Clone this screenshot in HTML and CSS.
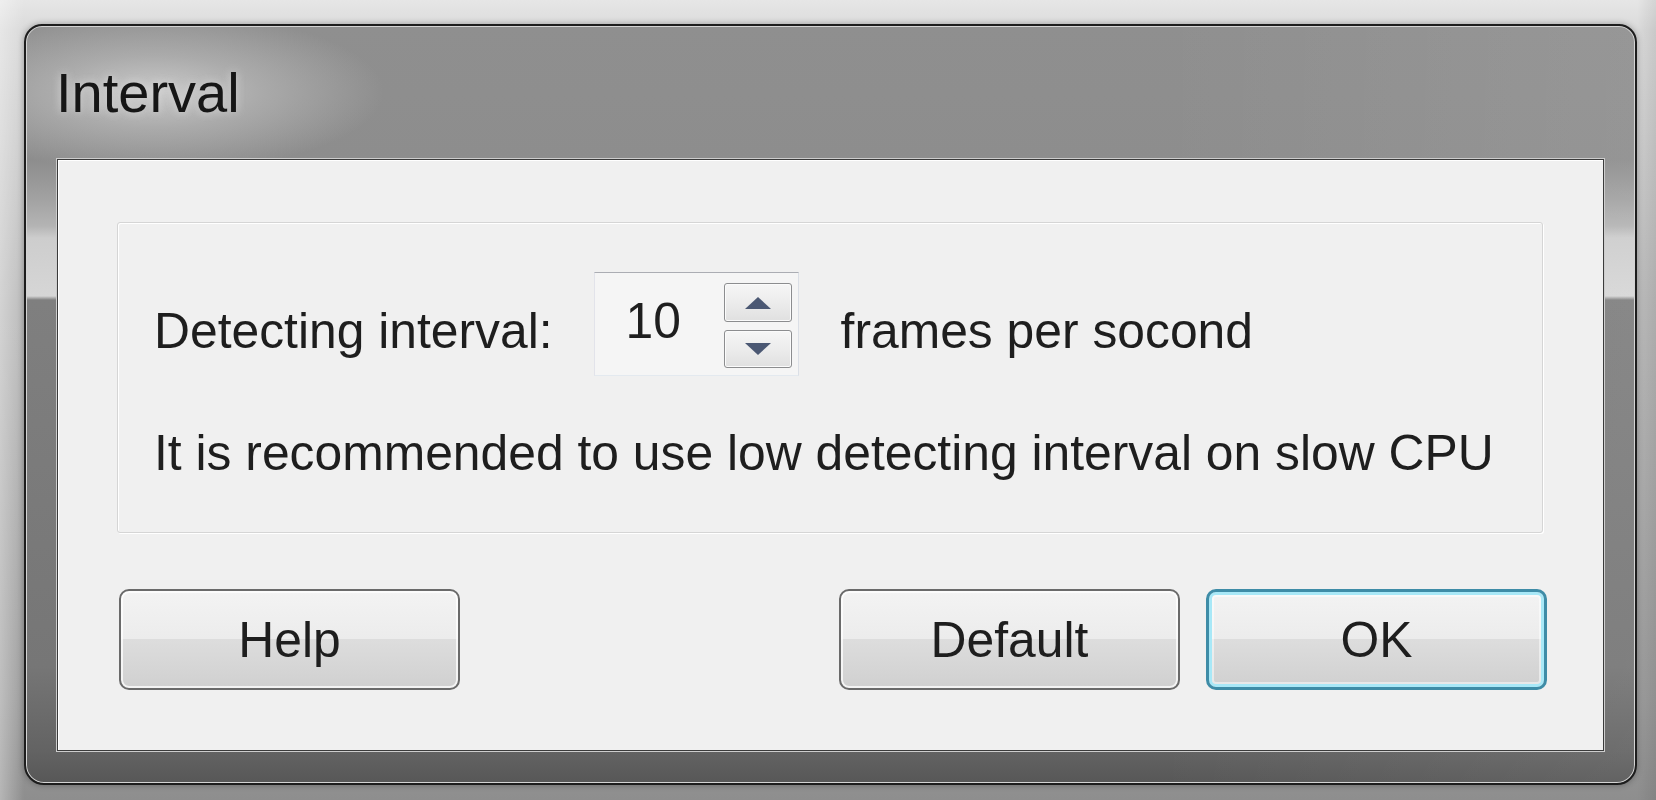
FILE: index.html
```html
<!DOCTYPE html>
<html lang="en">
<head>
<meta charset="utf-8">
<title>Interval</title>
<link rel="stylesheet" href="styles.css">
</head>
<body>
<div class="screen">
  <div class="window">
    <div class="titlebar"><span class="title">Interval</span></div>
    <div class="client">
      <div class="group">
        <div class="row">
          <span class="label">Detecting interval:</span>
          <div class="spin">
            <span class="spin-value">10</span>
            <div class="spin-buttons">
              <span class="spin-btn spin-up"><svg width="28" height="14" viewBox="0 0 28 14"><path d="M14 1 L27 13 H1 Z" fill="#4b5873"/></svg></span>
              <span class="spin-btn spin-down"><svg width="28" height="14" viewBox="0 0 28 14"><path d="M1 1 H27 L14 13 Z" fill="#4b5873"/></svg></span>
            </div>
          </div>
          <span class="label unit">frames per socond</span>
        </div>
        <p class="hint">It is recommended to use low detecting interval on slow CPU</p>
      </div>
      <div class="buttons">
        <button class="btn">Help</button>
        <span class="spacer"></span>
        <button class="btn">Default</button>
        <button class="btn btn-primary">OK</button>
      </div>
    </div>
  </div>
</div>
</body>
</html>
```

FILE: styles.css
```css
html, body {
  margin: 0;
  padding: 0;
}

body {
  width: 1656px;
  height: 800px;
  overflow: hidden;
  font-family: "Liberation Sans", Arial, sans-serif;
  color: #1e1e1e;
  background:
    linear-gradient(to right, rgba(255,255,255,0.35) 0, rgba(255,255,255,0) 24px, rgba(0,0,0,0) calc(100% - 19px), rgba(0,0,0,0.08) 100%),
    linear-gradient(to bottom, #e6e6e6 0, #dadada 30px, #bcbcbc 300px, #9c9c9c 700px, #8e8e8e 100%);
}

.screen {
  box-sizing: border-box;
  height: 800px;
  padding: 24px 19px 15px 24px;
  display: flex;
}

.window {
  flex: 1;
  box-sizing: border-box;
  display: flex;
  flex-direction: column;
  padding: 0 31px 32px;
  border: 2px solid #1d1d1d;
  border-radius: 18px 18px 20px 20px;
  box-shadow: inset 0 0 0 1px #d4d4d4, 0 0 6px rgba(0,0,0,0.3);
  background:
    radial-gradient(ellipse 230px 80px at 128px 66px, rgba(208,208,208,0.9) 0, rgba(190,190,190,0.6) 45%, rgba(150,150,150,0) 100%),
    linear-gradient(to right, rgba(255,255,255,0) 70%, rgba(255,255,255,0.07) 100%),
    linear-gradient(to bottom, #8f8f8f 0, #8d8d8d 134px, #a0a0a0 170px, #b4b4b4 200px, #cdcdcd 212px, #d6d6d6 270px, #7f7f7f 274px, #767676 640px, #636363 725px, #575757 100%);
}

.titlebar {
  height: 133px;
  box-sizing: border-box;
  padding-top: 35px;
  margin-left: -1px;
}

.title {
  font-size: 56px;
  line-height: 64px;
  color: #161616;
  text-shadow: 0 0 10px rgba(225,225,225,0.8);
}

.client {
  flex: 1;
  display: flex;
  flex-direction: column;
  border: 1px solid #3b3b3b;
  background: #f0f0f0;
  padding: 62px 60px 60px 59px;
  box-shadow: 0 0 0 1px #cdcdcd, inset 1px 1px 0 #ffffff;
}

.group {
  border: 1px solid #d5d5d5;
  border-radius: 3px;
  box-shadow: inset 1px 1px 0 #ffffff, 1px 1px 0 #ffffff;
  padding: 49px 0 51px 36px;
}

.row {
  display: flex;
  align-items: flex-start;
}

.label {
  font-size: 49.8px;
  line-height: 56px;
  margin-top: 31px;
  white-space: nowrap;
}

.unit {
  margin-left: 42px;
}

.spin {
  margin-left: 41px;
  width: 205px;
  height: 104px;
  box-sizing: border-box;
  display: flex;
  border: 1px solid;
  border-color: #abadb3 #dbdfe6 #e3e9ef #e2e3ea;
  background: #f5f5f5;
}

.spin-value {
  flex: 1;
  font-size: 49.8px;
  line-height: 56px;
  padding: 20px 0 0 31px;
}

.spin-buttons {
  width: 68px;
  display: flex;
  flex-direction: column;
  gap: 8px;
  padding: 10px 6px 0 0;
}

.spin-btn {
  box-sizing: border-box;
  display: flex;
  align-items: center;
  justify-content: center;
  border: 1px solid #8c8d8f;
  border-radius: 3px;
  background: linear-gradient(to bottom, #f6f6f6 0, #ececec 50%, #e0e0e0 100%);
  box-shadow: inset 0 0 0 1px #fbfbfb;
}

.spin-up {
  height: 39px;
}

.spin-down {
  height: 38px;
}

.hint {
  margin: 49px 0 0;
  font-size: 49.8px;
  line-height: 56px;
  white-space: nowrap;
}

.buttons {
  display: flex;
  margin: 56px -4px 0 2px;
}

.spacer {
  flex: 1;
}

.btn {
  width: 341px;
  height: 101px;
  box-sizing: border-box;
  padding: 0;
  font-family: "Liberation Sans", Arial, sans-serif;
  font-size: 49.8px;
  line-height: 56px;
  color: #1e1e1e;
  border: 2px solid #6a6a6a;
  border-radius: 10px;
  background: linear-gradient(to bottom, #f3f3f3 0, #ececec 49%, #dddddd 50%, #d0d0d0 100%);
  box-shadow: inset 0 0 0 2px rgba(255,255,255,0.75);
}

.btn-primary {
  margin-left: 26px;
  border: 3px solid #3e8ca7;
  box-shadow: inset 0 0 0 3px #a8e8f7, inset 0 0 0 5px rgba(255,255,255,0.5);
}
```
